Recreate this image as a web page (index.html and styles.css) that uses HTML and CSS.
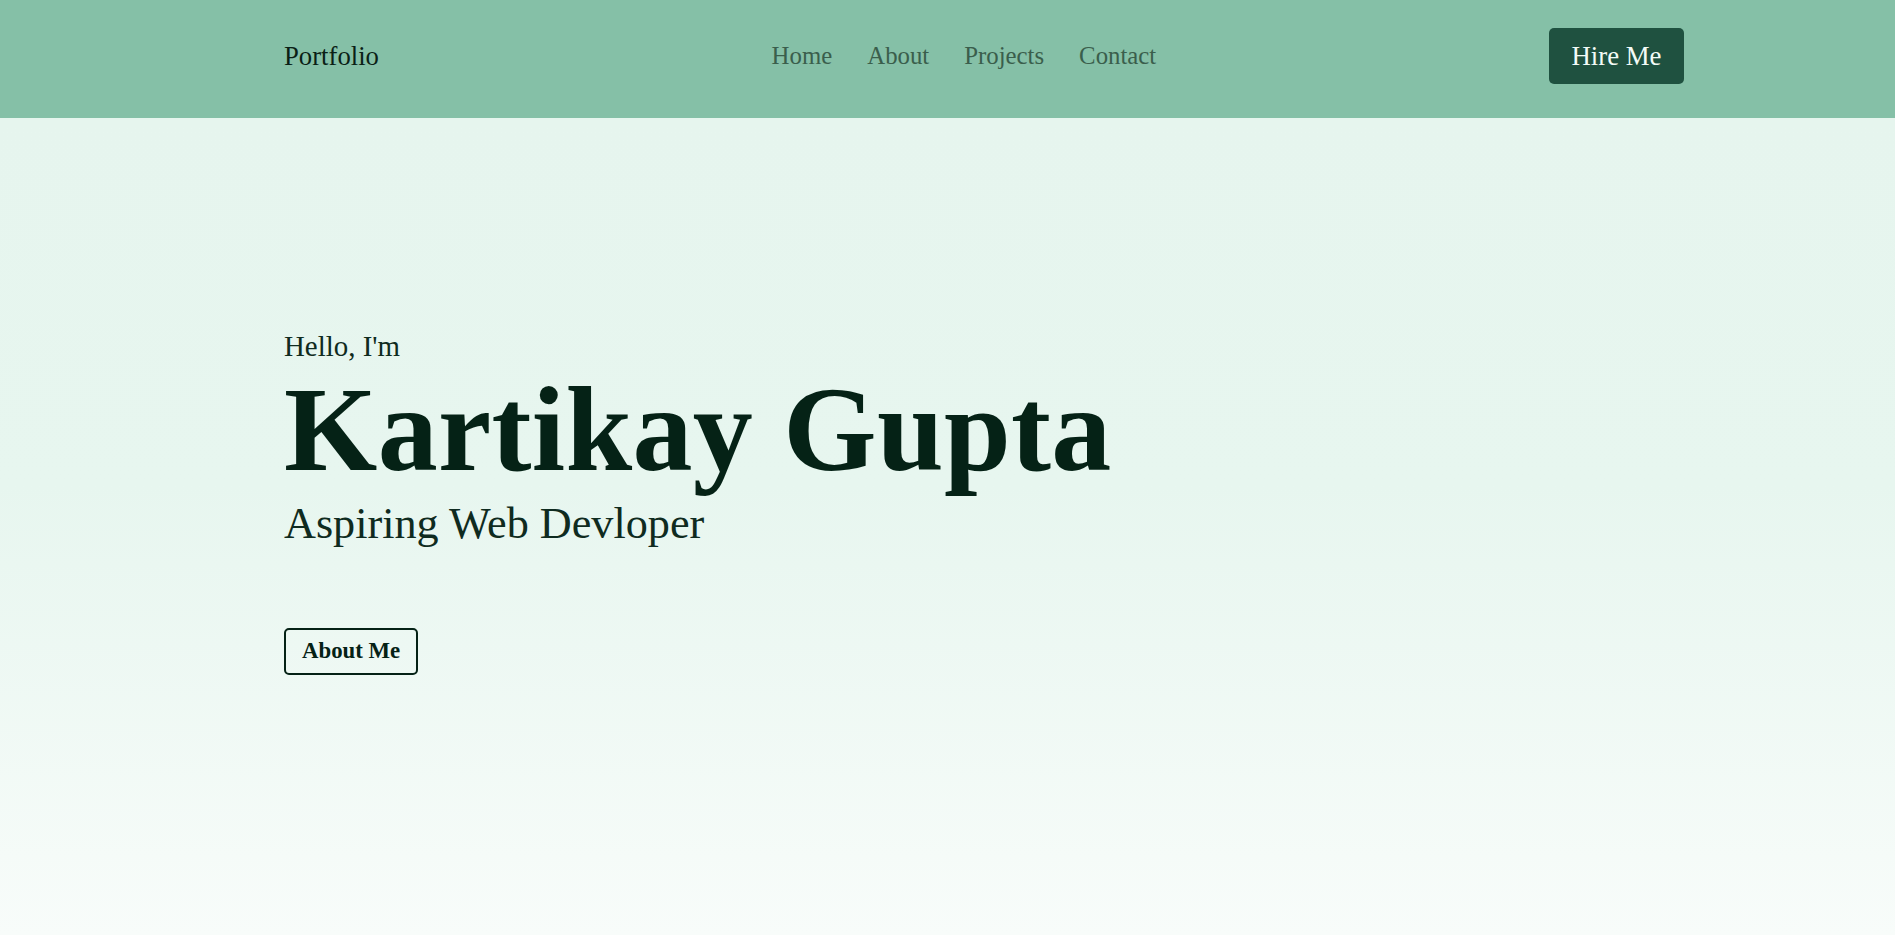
FILE: index.html
```html
<!DOCTYPE html>
<html lang="en">
<head>
<meta charset="utf-8">
<title>Portfolio</title>
<link rel="stylesheet" href="styles.css">
</head>
<body>
<header class="navbar">
  <div class="logo">Portfolio</div>
  <nav class="nav-links">
    <a href="#">Home</a>
    <a href="#">About</a>
    <a href="#">Projects</a>
    <a href="#">Contact</a>
  </nav>
  <a class="hire-btn" href="#">Hire Me</a>
</header>
<main class="hero">
  <p class="hello">Hello, I'm</p>
  <h1 class="name">Kartikay Gupta</h1>
  <p class="role">Aspiring Web Devloper</p>
  <a class="about-btn" href="#">About Me</a>
</main>
</body>
</html>
```

FILE: styles.css
```css
* { box-sizing: border-box; }
html, body { margin: 0; padding: 0; height: 100%; }
body {
  font-family: "Liberation Serif", "Times New Roman", serif;
  background: #e6f5ee;
  min-height: 935px;
  display: flex;
  flex-direction: column;
}
.navbar {
  height: 118px;
  background: #85c0a7;
  display: flex;
  align-items: center;
  justify-content: space-between;
  padding: 0 211px 6px 284px;
}
.logo {
  font-size: 26.7px;
  line-height: 1;
  color: #0b1f16;
}
.nav-links {
  display: flex;
  gap: 35px;
}
.nav-links a {
  font-size: 24.8px;
  line-height: 1;
  color: #3a5e4c;
  text-decoration: none;
}
.hire-btn {
  display: block;
  background: #1f5140;
  color: #f3fbf7;
  font-size: 26.8px;
  line-height: 1;
  padding: 15px 22.5px;
  border-radius: 5px;
  text-decoration: none;
}
.hero {
  flex: 1;
  background: linear-gradient(to bottom, #e6f5ee 0%, #e7f6ef 45%, #f8fcfa 100%);
  padding: 214px 0 0 284px;
  display: flex;
  flex-direction: column;
  align-items: flex-start;
}
.hello {
  margin: 0;
  font-size: 28.9px;
  line-height: 1;
  color: #0f2b20;
}
.name {
  margin: 9.2px 0 0;
  font-size: 120px;
  line-height: 1;
  font-weight: 700;
  letter-spacing: 0.3px;
  color: #052216;
}
.role {
  margin: 11.7px 0 0;
  font-size: 44.2px;
  line-height: 1;
  color: #0f2b20;
}
.about-btn {
  margin-top: 82.2px;
  display: block;
  font-size: 22.8px;
  font-weight: 700;
  line-height: 1;
  color: #052216;
  text-decoration: none;
  border: 2px solid #052216;
  border-radius: 5px;
  padding: 10px 16px;
}
```
